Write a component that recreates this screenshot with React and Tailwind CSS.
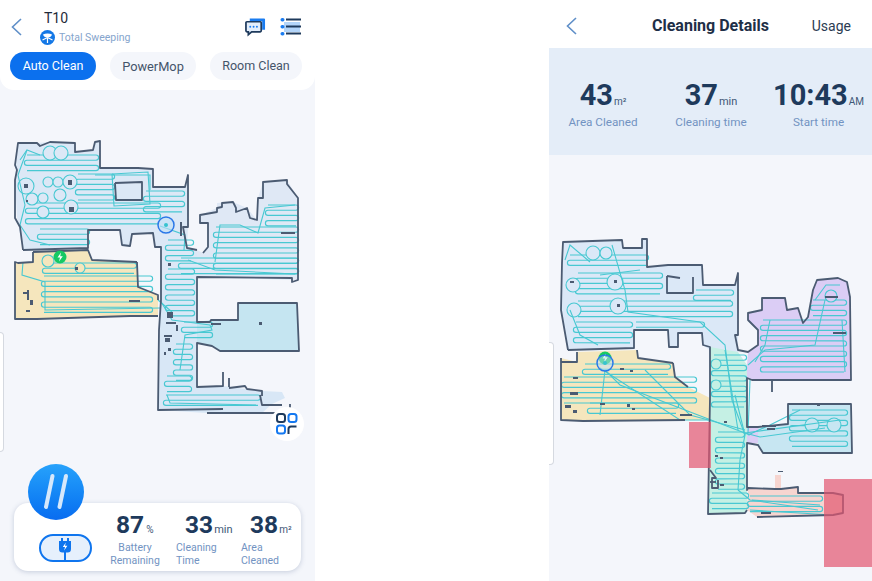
const pts = (a) => a.map((p) => p.join(",")).join(" ");

function snake(x1, x2, y1, y2, step = 5.2) {
  const r = step / 2;
  let d = `M${x1} ${y1}`;
  let y = y1;
  let right = true;
  while (y <= y2) {
    d += `H${right ? x2 : x1}`;
    if (y + step <= y2) {
      d += `A${r} ${r} 0 0 ${right ? 1 : 0} ${right ? x2 : x1} ${y + step}`;
    }
    y += step;
    right = !right;
  }
  return d;
}

const WALL = "#4b5b72";
const TEAL = "#48c8d2";

function MapArt({ viewBox, rooms, walls, snakes, circles, lines, blocks, children }) {
  return (
    <svg viewBox={viewBox} className="absolute inset-0 w-full h-full">
      {rooms.map((r, i) => (
        <polygon key={i} points={pts(r.p)} fill={r.c} />
      ))}
      {snakes.map((s, i) => (
        <path key={i} d={snake(...s)} fill="none" stroke={TEAL} strokeWidth="1.15" />
      ))}
      {circles.map((c, i) => (
        <circle key={i} cx={c[0]} cy={c[1]} r={c[2]} fill={c[3] || "#dce8f6"} stroke={TEAL} strokeWidth="1.1" />
      ))}
      {lines.map((l, i) => (
        <polyline key={i} points={pts(l)} fill="none" stroke={TEAL} strokeWidth="1.1" />
      ))}
      {walls.map((w, i) => (
        <polyline key={i} points={pts(w)} fill="none" stroke={WALL} strokeWidth="1.8" strokeLinejoin="round" />
      ))}
      {blocks.map((b, i) => (
        <rect key={i} x={b[0]} y={b[1]} width={b[2]} height={b[3]} fill={WALL} />
      ))}
      {children}
    </svg>
  );
}

const leftRooms = [
  { c: "#dce8f6", p: [[18,143],[37,143],[50,142],[75,143],[75,152],[93,150],[95,142],[100,141],[100,168],[138,168],[153,169],[153,187],[185,187],[188,175],[188,227],[187,248],[197,250],[197,300],[161,300],[161,247],[155,247],[153,233],[132,234],[130,246],[122,245],[120,230],[88,230],[88,248],[23,250],[17,217],[15,180]] },
  { c: "#dfe8f5", p: [[197,250],[203,253],[208,247],[208,223],[200,223],[200,215],[217,208],[217,203],[233,202],[247,208],[257,220],[258,198],[263,182],[287,180],[298,198],[298,280],[197,277]] },
  { c: "#f5e6bd", p: [[33,252],[88,250],[92,260],[137,262],[138,287],[158,295],[158,316],[130,316],[37,319],[15,319],[15,262],[33,262]] },
  { c: "#d8e7f6", p: [[160,290],[197,290],[197,387],[223,386],[262,391],[282,392],[285,398],[272,404],[262,413],[207,413],[158,410]] },
  { c: "#c5e5f1", p: [[197,322],[211,320],[238,320],[238,303],[297,303],[299,351],[220,351],[212,346],[197,343]] },
];
const leftWalls = [
  [[23,250],[20,227],[15,218],[15,180],[17,170],[15,165],[18,143],[37,143],[40,146],[50,142],[75,143],[75,152],[93,150],[95,142],[100,141],[100,168],[138,168],[153,169],[153,187],[185,187],[188,175],[188,227],[183,227],[187,248],[197,250]],
  [[23,250],[88,248],[88,230],[120,230],[122,245],[130,246],[132,234],[153,233],[155,247],[161,247],[161,300],[159,330],[158,410],[223,409]],
  [[203,253],[208,247],[208,223],[200,223],[200,215],[217,212],[217,208],[222,207],[222,203],[233,202],[236,208],[236,212],[247,208],[250,218],[257,220],[258,198],[263,198],[263,182],[287,180],[287,184],[298,198],[298,280],[292,282],[292,278],[197,277],[197,322],[210,322],[211,320],[238,320],[238,303],[297,303],[299,351],[220,351],[212,346],[197,343],[197,387],[223,386],[223,372]],
  [[229,387],[229,378]],
  [[229,388],[245,386],[247,389],[262,391],[262,396]],
  [[260,395],[262,405],[282,405]],
  [[207,413],[290,413]],
  [[290,408],[290,404]],
  [[33,252],[33,262],[18,263],[15,262],[15,319],[37,319],[130,316],[158,316]],
  [[137,262],[138,287],[158,295],[158,300]],
  [[33,252],[88,250],[92,260],[137,262]],
  [[115,183],[142,182],[142,200],[116,200],[115,183]],
];
const leftSnakes = [
  [27,96,155,171],[78,112,174,200],[28,158,203,228],[146,182,191,214],[40,87,229,245],[168,191,240,264],
  [216,296,227,275],[268,296,205,227],[181,296,258,276],[168,192,269,316],[176,190,344,381],[167,189,376,394],[166,258,395,406],
  [44,150,276,313],[45,134,263,277],[184,210,322,338],
];
const leftCircles = [
  [50,153,7],[61,153,7],[26,186,8],[48,182,5],[58,182,5],[70,182,7],[32,199,6],[43,198,5],[60,195,6],[71,207,7],[43,212,6],
  [48,261,6,"#f5e6bd"],[80,268,5,"#f5e6bd"],
];
const leftLines = [
  [[20,160],[27,150],[40,155]],[[27,150],[18,175],[25,205],[20,225],[30,240],[50,245]],[[95,175],[150,175],[150,190]],
  [[112,174],[148,172],[150,204],[114,206],[112,174]],
  [[160,226],[185,235],[184,250]],[[215,262],[220,225],[240,225],[258,233],[265,208],[295,205]],[[160,300],[172,320],[210,325],[212,330],[185,335],[180,370]],
  [[158,300],[172,312]],[[23,262],[22,275],[45,282],[45,310],[160,308]],[[167,395],[170,403],[256,405]],[[188,260],[215,270],[295,274]],
];
const leftBlocks = [
  [24,184,4,4],[68,180,4,5],[69,207,5,5],[129,300,11,2],[211,323,10,2],[259,322,3,3],[281,232,14,2],[180,222,2,14],
  [167,312,6,6],[166,322,10,2],[164,335,8,2],[176,325,2,6],[165,338,5,4],[168,348,3,3],[164,352,2,3],[26,200,2,2],[23,292,5,2],[30,300,3,5],[26,310,4,2],[27,290,2,10],[75,267,3,3],[168,263,3,3],
];

const rightRooms = [
  { c: "#dbe8f7", p: [[563,242],[622,240],[623,248],[642,248],[642,239],[647,239],[647,267],[668,265],[702,265],[703,285],[735,285],[738,273],[738,335],[738,352],[712,352],[703,345],[702,333],[678,333],[678,347],[669,347],[668,330],[634,330],[634,348],[568,350],[561,310],[562,263]] },
  { c: "#dbcdf5", p: [[748,352],[758,345],[758,330],[748,320],[748,313],[762,310],[762,298],[785,298],[787,310],[798,308],[803,323],[808,317],[813,290],[817,280],[838,278],[847,282],[850,297],[851,380],[752,380],[747,378],[747,365]] },
  { c: "#f5e6bd", p: [[577,362],[577,352],[637,350],[638,358],[673,363],[675,377],[688,387],[702,394],[710,398],[710,420],[583,421],[561,420],[561,358]] },
  { c: "#c5f0e4", p: [[710,347],[738,352],[747,365],[747,490],[747,510],[745,513],[708,514],[710,420]] },
  { c: "#dbcdf5", p: [[747,427],[758,427],[760,443],[747,443]] },
  { c: "#c7e6f2", p: [[758,427],[788,424],[788,404],[851,404],[852,453],[763,453],[758,445]] },
  { c: "#f6d5d0", p: [[748,488],[775,488],[775,475],[781,475],[781,488],[798,487],[798,493],[833,493],[843,495],[843,513],[833,515],[757,517],[747,510]] },
];
const rightWalls = [
  [[568,350],[561,310],[562,263],[563,242],[622,240],[623,248],[642,248],[642,239],[647,239],[647,267],[668,265],[702,265],[703,285],[735,285],[738,273],[738,335],[735,335],[738,350],[748,352],[758,345],[758,330],[748,320],[748,313],[762,310],[762,298],[785,298],[787,310],[798,308],[803,323],[808,317],[813,290],[817,280],[838,278],[847,282],[850,297],[851,380],[752,380],[747,378],[747,427],[758,427],[788,424],[788,404],[851,404],[852,453],[763,453],[758,445],[747,443],[747,490],[748,488],[775,489],[781,489],[798,487],[798,493],[833,493],[843,495],[843,513],[833,515],[757,517]],
  [[568,350],[634,348],[634,330],[668,330],[669,347],[678,347],[678,333],[702,333],[703,345],[710,347],[710,398],[708,514],[745,513],[747,510]],
  [[561,358],[561,420],[583,421],[685,420]],
  [[561,362],[577,362],[577,352]],
  [[637,350],[638,358],[673,363]],
  [[673,363],[675,377],[688,387]],
  [[667,276],[667,293],[693,293],[693,277]],
  [[667,276],[680,278]],
  [[762,380],[772,380],[772,392]],
  [[710,470],[716,478],[712,478],[712,488],[718,488],[718,480]],
  [[710,482],[716,482]],
];
const rightSnakes = [
  [570,646,255,270],[578,660,273,298],[578,730,301,320],[696,731,290,301],[576,630,322,345],[636,702,322,328],
  [763,844,320,376],[813,844,300,320],[564,694,377,404],[590,676,403,417],[585,668,364,377],
  [714,744,355,412],[718,742,432,490],[712,746,493,511],[792,845,410,448],[750,820,496,512],
];
const rightCircles = [
  [593,253,7,"#dbe8f7"],[606,253,6,"#dbe8f7"],[615,282,8,"#dbe8f7"],[618,306,8,"#dbe8f7"],[573,285,7,"#dbe8f7"],[574,310,7,"#dbe8f7"],
  [812,425,7,"#c7e6f2"],[834,425,7,"#c7e6f2"],[831,296,6,"#dbcdf5"],[716,364,5,"#c5f0e4"],[716,385,5,"#c5f0e4"],
];
const rightLines = [
  [[612,245],[625,290],[628,312],[700,322],[725,345],[732,400],[745,435]],
  [[640,270],[600,275]],[[565,260],[570,245],[590,262]],[[570,310],[580,335],[598,345]],
  [[605,370],[620,385],[750,435]],[[605,370],[600,415]],[[600,368],[680,420],[708,420]],[[645,370],[690,415],[745,430]],
  [[725,350],[738,430]],[[735,395],[745,435],[740,460],[738,490]],[[745,433],[760,437],[825,428]],[[745,433],[840,420]],
  [[748,435],[770,425],[800,410]],[[738,490],[750,500],[818,510]],[[752,500],[820,505]],[[750,380],[748,433]],
  [[748,365],[765,350],[815,345],[825,300]],[[815,300],[826,285],[840,285]],[[750,510],[832,515]],
  [[845,372],[842,320]],[[755,362],[765,345],[770,320]],
];
const rightBlocks = [
  [570,281,4,2],[614,280,3,3],[617,304,3,3],[825,296,13,2],[833,332,13,2],[724,421,3,2],[715,455,3,2],[720,457,3,2],[817,405,3,1],[573,377,5,2],[620,368,4,2],[630,370,3,2],[570,392,8,3],[565,405,6,3],[573,410,4,3],[600,403,5,2],[627,404,3,3],[632,408,3,2],[680,414,12,2],[762,425,14,2],[767,428,8,2],[720,484,4,2],[761,512,10,2],[778,471,5,1],
];

function Back({ x }) {
  return (
    <svg width="13" height="20" viewBox="0 0 13 20" className={x} fill="none">
      <path d="M11 2 2.5 10 11 18" stroke="#5f8fc8" strokeWidth="1.6" />
    </svg>
  );
}

export default function App() {
  return (
    <div className="flex w-[872px] h-[581px] bg-white overflow-hidden" style={{ fontFamily: "Roboto, 'Noto Sans', sans-serif" }}>
      {/* LEFT PANEL */}
      <div className="relative w-[315px] h-full bg-[#f4f6fb] flex flex-col">
        <MapArt viewBox="0 0 315 581" rooms={leftRooms} walls={leftWalls} snakes={leftSnakes} circles={leftCircles} lines={leftLines} blocks={leftBlocks}>
          <circle cx="60" cy="257" r="6.5" fill="#16c964" />
          <path d="M61 252.5 57.5 257.5H60L59 261.5 62.8 256.3H60.2Z" fill="#fff" />
          <circle cx="166" cy="225" r="8" fill="#bfe0f7" fillOpacity=".6" stroke="#2b78e8" strokeWidth="1.5" />
          <circle cx="166" cy="225" r="2" fill="#37c3cf" />
        </MapArt>

        <div className="relative h-[90px] bg-white rounded-b-[14px] shrink-0">
          <div className="flex items-start h-[52px]">
            <Back x="ml-[10px] mt-[17px]" />
            <div className="ml-[21px] mt-[9px] flex flex-col">
              <span className="text-[14px] leading-[18px] text-[#1f2a3a]">T10</span>
              <div className="flex items-center -ml-[4px] mt-[3px]">
                <svg width="15" height="15" viewBox="0 0 15 15" fill="none">
                  <circle cx="7.5" cy="7.5" r="7.5" fill="#1478e6" />
                  <path d="M3 4.500C5.500 3 9.500 3 12 4.500 11.500 6.500 10 7.500 7.500 7.500 5 7.500 3.500 6.500 3 4.500Z" fill="#fff" />
                  <path d="M7.500 7.500V13M7.500 7.500 12.500 10M7.500 7.500 2.500 10" stroke="#fff" strokeWidth="1.2" />
                </svg>
                <span className="ml-[4px] text-[10.5px] leading-[15px] text-[#86a5cd]">Total Sweeping</span>
              </div>
            </div>
            <svg width="21" height="20" viewBox="0 0 22 20" className="ml-auto mt-[17px] mr-[14px]" fill="none">
              <path d="M5 1h15a1 1 0 0 1 1 1v11h-3V4H5Z" fill="#1a7cf0" />
              <path d="M2 4.500h14a1 1 0 0 1 1 1V14a1 1 0 0 1-1 1H7l-3.500 3V15H2a1 1 0 0 1-1-1V5.500a1 1 0 0 1 1-1Z" fill="#e3eefb" stroke="#1e3a5c" strokeWidth="1.8" />
              <circle cx="5.500" cy="9.700" r="1" fill="#1a7cf0" />
              <circle cx="9" cy="9.700" r="1" fill="#1a7cf0" />
              <circle cx="12.500" cy="9.700" r="1" fill="#1a7cf0" />
            </svg>
            <svg width="21" height="20" viewBox="0 0 21 20" className="mr-[14px] mt-[17px]">
              <rect x="4" y="5" width="16" height="10" fill="#b3d5fa" />
              <rect x="0.500" y="1" width="4" height="3.500" rx="1.700" fill="#1a7cf0" />
              <rect x="0.500" y="8" width="4" height="3.500" rx="1.700" fill="#1a7cf0" />
              <rect x="0.500" y="15" width="4" height="3.500" rx="1.700" fill="#1a7cf0" />
              <rect x="6" y="1.500" width="15" height="2" fill="#1e3a5c" />
              <rect x="6" y="8.500" width="15" height="2" fill="#1e3a5c" />
              <rect x="6" y="15.500" width="15" height="2" fill="#1e3a5c" />
            </svg>
          </div>
          <div className="flex gap-[14px] pl-[10px]">
            <div className="w-[86px] h-[28px] pt-[1px] rounded-full bg-[#0b70ee] text-white text-[12.5px] flex items-center justify-center">Auto Clean</div>
            <div className="w-[86px] h-[28px] pt-[1px] rounded-full bg-[#f4f6fb] text-[#44546a] text-[12.8px] flex items-center justify-center">PowerMop</div>
            <div className="w-[92px] h-[28px] pt-[1px] rounded-full bg-[#f4f6fb] text-[#44546a] text-[12.5px] flex items-center justify-center">Room Clean</div>
          </div>
        </div>

        <div className="flex-1 relative">
          <div className="absolute left-0 top-[242px] w-[4px] h-[120px] bg-white border border-l-0 border-[#d5d9e0] rounded-r-[4px]" />
          <div className="absolute left-[270px] top-[317px] w-[34px] h-[34px] rounded-full bg-white flex items-center justify-center">
            <svg width="22" height="22" viewBox="0 0 22 22" fill="none" strokeWidth="2">
              <rect x="1" y="1" width="8" height="8" rx="2.500" stroke="#1e3a5c" />
              <rect x="12.500" y="1" width="8" height="8" rx="2.500" stroke="#1478f0" />
              <rect x="1" y="12.500" width="8" height="8" rx="2.500" stroke="#1478f0" />
              <path d="M20.500 13.500H15a2.500 2.500 0 0 0-2.500 2.500v5" stroke="#1e3a5c" />
            </svg>
          </div>
        </div>

        <div className="relative mx-[14px] mb-[10px] h-[68px] bg-white rounded-[14px] shadow-[0_1px_5px_rgba(90,110,150,0.3)] flex shrink-0">
          <div className="absolute -top-[39px] left-[14px] w-[56px] h-[56px] rounded-full bg-gradient-to-b from-[#27a2fb] to-[#0a6cf0] flex items-center justify-center">
            <svg width="26" height="38" viewBox="0 0 26 38" fill="none" stroke="#d6e8fb" strokeWidth="4" strokeLinecap="round">
              <path d="M9.500 3 3 34" />
              <path d="M23 3 16.500 34" />
            </svg>
          </div>
          <div className="w-[96px] flex items-end justify-center pb-[9px] pl-[6px]">
            <div className="w-[53px] h-[28px] rounded-full border-[2.5px] border-[#0f75ee] bg-[#e6f0fc] flex items-center justify-center overflow-hidden">
              <svg width="14" height="24" viewBox="0 0 14 24" className="mt-[2px]">
                <path d="M3 1h2v3h4V1h2v3h2v8a3.500 3.500 0 0 1-3.500 3.500h-5A3.500 3.500 0 0 1 1 12V4h2Z" fill="#0f75ee" />
                <path d="M7.800 5.500 4.800 10h2.200l-.8 3.500 3.200-4.700H7Z" fill="#fff" />
                <path d="M7 15v8" stroke="#0f75ee" strokeWidth="2" />
              </svg>
            </div>
          </div>
          <div className="w-[66px] pt-[7px] -ml-[6px]">
            <div className="flex items-baseline pl-[12px]">
              <span className="text-[24.5px] leading-[30px] font-bold text-[#1e3a5c]">87</span>
              <span className="text-[10px] text-[#3e5877] ml-[2px]">%</span>
            </div>
            <div className="text-[10.5px] leading-[12.5px] text-[#7293c2] text-center pr-[4px] mt-[2px]">Battery<br />Remaining</div>
          </div>
          <div className="w-[65px] pt-[7px] ml-[6px]">
            <div className="flex items-baseline pl-[9px]">
              <span className="text-[24.5px] leading-[30px] font-bold text-[#1e3a5c]">33</span>
              <span className="text-[11px] text-[#3e5877] ml-[1px]">min</span>
            </div>
            <div className="text-[10.5px] leading-[12.5px] text-[#7293c2] mt-[2px]">Cleaning<br />Time</div>
          </div>
          <div className="pt-[7px]">
            <div className="flex items-baseline pl-[9px]">
              <span className="text-[24.5px] leading-[30px] font-bold text-[#1e3a5c]">38</span>
              <span className="text-[10px] text-[#3e5877] ml-[1px]">m²</span>
            </div>
            <div className="text-[10.5px] leading-[12.5px] text-[#7293c2] mt-[2px]">Area<br />Cleaned</div>
          </div>
        </div>
      </div>

      <div className="w-[234px] shrink-0" />

      {/* RIGHT PANEL */}
      <div className="relative w-[323px] h-full bg-[#f4f6fb] flex flex-col">
        <MapArt viewBox="549 0 323 581" rooms={rightRooms} walls={rightWalls} snakes={rightSnakes} circles={rightCircles} lines={rightLines} blocks={rightBlocks}>
          <rect x="689" y="422" width="22" height="46" fill="#e2566f" fillOpacity=".7" />
          <rect x="824" y="479" width="48" height="88" fill="#e2566f" fillOpacity=".7" />
          <circle cx="605" cy="358" r="6.500" fill="#16c964" />
          <path d="M606 353.500 602.500 358.500H605L604 362.500 607.800 357.300H605.200Z" fill="#fff" />
          <circle cx="605" cy="363" r="8" fill="#bfe0f7" fillOpacity=".5" stroke="#2b78e8" strokeWidth="1.5" />
          <circle cx="605" cy="363" r="2" fill="#37c3cf" />
        </MapArt>

        <div className="relative h-[48px] bg-white flex items-center shrink-0">
          <Back x="ml-[16px] mt-[4px]" />
          <span className="ml-[74px] mt-[4px] text-[16px] font-bold text-[#1e2f47]">Cleaning Details</span>
          <span className="ml-auto mr-[21px] mt-[4px] text-[14px] text-[#2b3b52]">Usage</span>
        </div>
        <div className="relative h-[107px] bg-[#e4edf8] grid grid-cols-[108px_108px_107px] shrink-0 pt-[29px]">
          <div className="flex flex-col items-center">
            <div className="flex items-baseline">
              <span className="text-[29px] leading-[36px] font-bold text-[#1e3a5c]">43</span>
              <span className="text-[10px] text-[#3e5877] ml-[1px]">m²</span>
            </div>
            <span className="text-[11.7px] leading-[16px] text-[#7293c2] mt-[1px]">Area Cleaned</span>
          </div>
          <div className="flex flex-col items-center">
            <div className="flex items-baseline">
              <span className="text-[29px] leading-[36px] font-bold text-[#1e3a5c]">37</span>
              <span className="text-[11px] text-[#3e5877] ml-[1px]">min</span>
            </div>
            <span className="text-[11.7px] leading-[16px] text-[#7293c2] mt-[1px]">Cleaning time</span>
          </div>
          <div className="flex flex-col items-center">
            <div className="flex items-baseline">
              <span className="text-[29px] leading-[36px] font-bold text-[#1e3a5c]">10:43</span>
              <span className="text-[10px] text-[#3e5877] ml-[1px]">AM</span>
            </div>
            <span className="text-[11.7px] leading-[16px] text-[#7293c2] mt-[1px]">Start time</span>
          </div>
        </div>
        <div className="flex-1 relative">
          <div className="absolute left-0 top-[187px] w-[5px] h-[123px] bg-white border border-l-0 border-[#d5d9e0] rounded-r-[4px]" />
        </div>
      </div>
    </div>
  );
}
